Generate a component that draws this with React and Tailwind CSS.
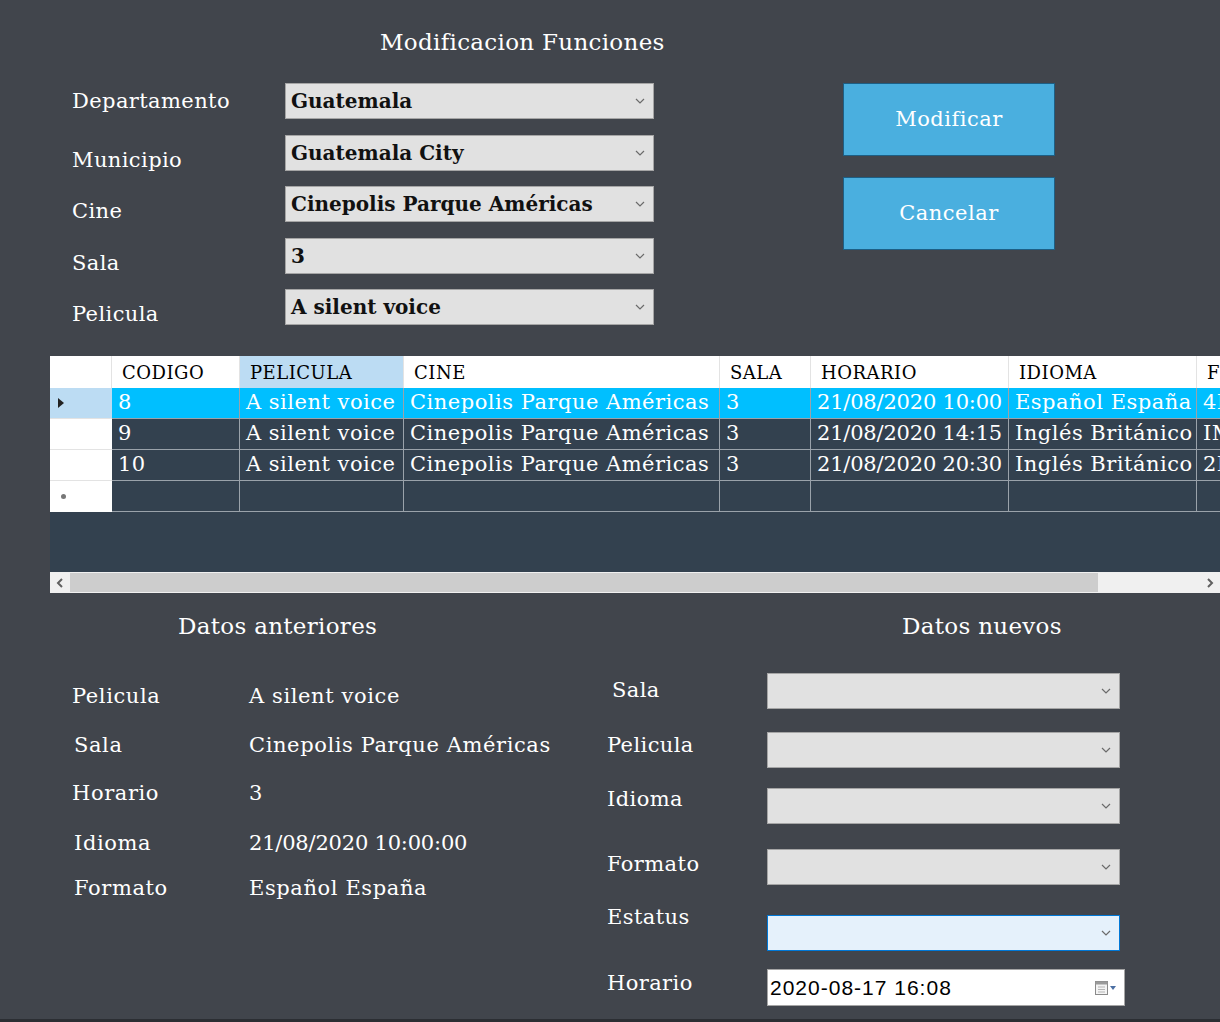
import React from "react";

const Chevron = () => (
  <svg width="10" height="6" viewBox="0 0 10 6" className="shrink-0">
    <polyline points="1,1 5,5 9,1" fill="none" stroke="#6b6b6b" strokeWidth="1.2" />
  </svg>
);

const Combo = ({ value, className = "", active }) => (
  <div
    className={
      "flex items-center justify-between h-[36px] pl-[5px] pr-[8px] border " +
      (active ? "bg-[#e5f1fb] border-[#0078d7] " : "bg-[#e1e1e1] border-[#a5a5a5] ") +
      className
    }
  >
    <span className="text-[20px] font-bold text-[#111] leading-none">{value}</span>
    <Chevron />
  </div>
);

const columns = [
  { title: "CODIGO", key: "codigo" },
  { title: "PELICULA", key: "pelicula", hl: true },
  { title: "CINE", key: "cine" },
  { title: "SALA", key: "sala" },
  { title: "HORARIO", key: "horario", tight: true },
  { title: "IDIOMA", key: "idioma" },
  { title: "FORMATO", key: "formato" },
];

const rows = [
  { codigo: "8", pelicula: "A silent voice", cine: "Cinepolis Parque Américas", sala: "3", horario: "21/08/2020 10:00", idioma: "Español España", formato: "4DX" },
  { codigo: "9", pelicula: "A silent voice", cine: "Cinepolis Parque Américas", sala: "3", horario: "21/08/2020 14:15", idioma: "Inglés Británico", formato: "IMAX" },
  { codigo: "10", pelicula: "A silent voice", cine: "Cinepolis Parque Américas", sala: "3", horario: "21/08/2020 20:30", idioma: "Inglés Británico", formato: "2D" },
];

const gridCols = "grid grid-cols-[62px_128px_164px_316px_91px_198px_188px_140px]";

function DataGrid() {
  return (
    <div className="ml-[50px] w-[1170px] h-[237px] overflow-hidden bg-[#33414f] flex flex-col">
      {/* header */}
      <div className={gridCols + " h-[32px] bg-white"}>
        <div className="border-r border-[#e3e3e3]" />
        {columns.map((c) => (
          <div
            key={c.key}
            className={
              "flex items-center pl-[10px] text-[18px] tracking-[0.5px] text-black border-r border-[#e3e3e3] whitespace-nowrap overflow-hidden " +
              (c.hl ? "bg-[#bcdcf3]" : "")
            }
          >
            {c.title}
          </div>
        ))}
      </div>
      {/* rows */}
      {rows.map((r, i) => (
        <div key={r.codigo} className={gridCols + " h-[31px]"}>
          <div
            className={
              "flex items-center pl-[8px] border-b border-[#e3e3e3] " +
              (i === 0 ? "bg-[#bcdcf3]" : "bg-white")
            }
          >
            {i === 0 && (
              <svg width="6" height="10" viewBox="0 0 6 10">
                <polygon points="0,0 6,5 0,10" fill="#222" />
              </svg>
            )}
          </div>
          {columns.map((c) => (
            <div
              key={c.key}
              className={
                "flex items-center pl-[6px] text-[21px] text-white whitespace-nowrap overflow-hidden border-r border-b border-[#9aa2aa] " +
                (c.tight ? "tracking-[-0.2px] " : "tracking-[0.5px] ") +
                (i === 0 ? "bg-[#00bfff]" : "")
              }
            >
              {r[c.key]}
            </div>
          ))}
        </div>
      ))}
      <div className={gridCols + " h-[31px]"}>
        <div className="flex items-center pl-[11px] bg-white">
          <span className="w-[5px] h-[5px] rounded-full bg-[#777]" />
        </div>
        {columns.map((c) => (
          <div key={c.key} className="border-r border-b border-[#9aa2aa]" />
        ))}
      </div>
      <div className="flex-1" />
      {/* horizontal scrollbar */}
      <div className="h-[21px] bg-[#f0f0f0] flex items-center">
        <div className="w-[20px] flex justify-center">
          <svg width="8" height="10" viewBox="0 0 8 10">
            <polyline points="6,1 2,5 6,9" fill="none" stroke="#606060" strokeWidth="2" />
          </svg>
        </div>
        <div className="w-[1028px] h-[19px] bg-[#cdcdcd]" />
        <div className="flex-1" />
        <div className="w-[20px] flex justify-center">
          <svg width="8" height="10" viewBox="0 0 8 10">
            <polyline points="2,1 6,5 2,9" fill="none" stroke="#606060" strokeWidth="2" />
          </svg>
        </div>
      </div>
    </div>
  );
}

const topRows = [
  { label: "Departamento", value: "Guatemala", off: "" },
  { label: "Municipio", value: "Guatemala City", off: "mt-[14px]" },
  { label: "Cine", value: "Cinepolis Parque Américas", off: "mt-[14px]" },
  { label: "Sala", value: "3", off: "mt-[14px]" },
  { label: "Pelicula", value: "A silent voice", off: "mt-[14px]" },
];

const oldData = [
  { label: "Pelicula", value: "A silent voice", pl: "pl-0", mt: "mt-[45px]", tr: "" },
  { label: "Sala", value: "Cinepolis Parque Américas", pl: "pl-[2px]", mt: "mt-[25px]", tr: "" },
  { label: "Horario", value: "3", pl: "pl-0", mt: "mt-[24px]", tr: "" },
  { label: "Idioma", value: "21/08/2020 10:00:00", pl: "pl-[2px]", mt: "mt-[26px]", tr: "tracking-[-0.2px]" },
  { label: "Formato", value: "Español España", pl: "pl-[2px]", mt: "mt-[21px]", tr: "" },
];

const newLabels = [
  { label: "Sala", cls: "mt-[39px] pl-[5px]" },
  { label: "Pelicula", cls: "mt-[31px]" },
  { label: "Idioma", cls: "mt-[30px]" },
  { label: "Formato", cls: "mt-[41px]" },
  { label: "Estatus", cls: "mt-[29px]" },
  { label: "Horario", cls: "mt-[42px]" },
];

export default function App() {
  return (
    <div className="w-[1220px] h-[1022px] bg-[#41454c] text-white font-['DejaVu_Serif',serif] overflow-hidden border-b-[3px] border-[#2b2e33]">
      <div className="pt-[28px] pl-[380px] h-[56px] text-[23px] leading-[28px] tracking-[0.3px]">
        Modificacion Funciones
      </div>

      {/* top form */}
      <div className="flex mt-[27px]">
        <div className="pl-[72px] flex flex-col gap-[15.5px]">
          {topRows.map((r) => (
            <div key={r.label} className="flex items-center h-[36px]">
              <div className={"w-[213px] text-[21px] leading-[24px] tracking-[0.4px] " + r.off}>{r.label}</div>
              <Combo value={r.value} className="w-[369px]" />
            </div>
          ))}
        </div>
        <div className="ml-[189px] flex flex-col gap-[21px]">
          <button className="w-[212px] h-[73px] bg-[#4aafdf] border border-[#1d5f85] text-white text-[21px] tracking-[0.5px] font-['DejaVu_Serif',serif]">
            Modificar
          </button>
          <button className="w-[212px] h-[73px] bg-[#4aafdf] border border-[#1d5f85] text-white text-[21px] tracking-[0.5px] font-['DejaVu_Serif',serif]">
            Cancelar
          </button>
        </div>
      </div>

      <div className="mt-[31px]">
        <DataGrid />
      </div>

      {/* bottom */}
      <div className="flex">
        <div className="w-[607px] pl-[72px]">
          <div className="mt-[20px] pl-[106px] text-[23px] leading-[26px] tracking-[0.3px]">Datos anteriores</div>
          {oldData.map((d) => (
            <div key={d.label} className={"flex text-[21px] leading-[24px] tracking-[0.6px] " + d.mt}>
              <div className={"w-[177px] " + d.pl}>{d.label}</div>
              <div className={d.tr}>{d.value}</div>
            </div>
          ))}
        </div>
        <div className="flex flex-col">
          <div className="mt-[20px] pl-[295px] text-[23px] leading-[26px] tracking-[0.3px] whitespace-nowrap">
            Datos nuevos
          </div>
          <div className="flex">
            <div className="w-[160px] flex flex-col text-[21px] leading-[24px] tracking-[0.4px]">
              {newLabels.map((l) => (
                <div key={l.label} className={l.cls}>{l.label}</div>
              ))}
            </div>
            <div className="w-[360px] flex flex-col">
              <Combo value="" className="mt-[34px] w-[353px]" />
              <Combo value="" className="mt-[23px] w-[353px]" />
              <Combo value="" className="mt-[20px] w-[353px]" />
              <Combo value="" className="mt-[25px] w-[353px]" />
              <Combo value="" active className="mt-[30px] w-[353px]" />
              <div className="mt-[18px] w-[358px] h-[37px] bg-white border border-[#a5a5a5] flex items-center justify-between pl-[2px] pr-[6px]">
                <span className="text-[21px] tracking-[1px] text-black font-['Liberation_Sans',Arial,sans-serif]">2020-08-17 16:08</span>
                <svg width="24" height="18" viewBox="0 0 24 18">
                  <rect x="1.5" y="2.5" width="12" height="13" fill="#f4f4f4" stroke="#8a8a8a" />
                  <rect x="1.5" y="2.5" width="12" height="3" fill="#9a9a9a" />
                  <line x1="4" y1="8" x2="11" y2="8" stroke="#b5b5b5" />
                  <line x1="4" y1="10.5" x2="11" y2="10.5" stroke="#b5b5b5" />
                  <line x1="4" y1="13" x2="11" y2="13" stroke="#b5b5b5" />
                  <polygon points="16,7 22,7 19,11" fill="#4b6fa3" />
                </svg>
              </div>
            </div>
          </div>
        </div>
      </div>
    </div>
  );
}
